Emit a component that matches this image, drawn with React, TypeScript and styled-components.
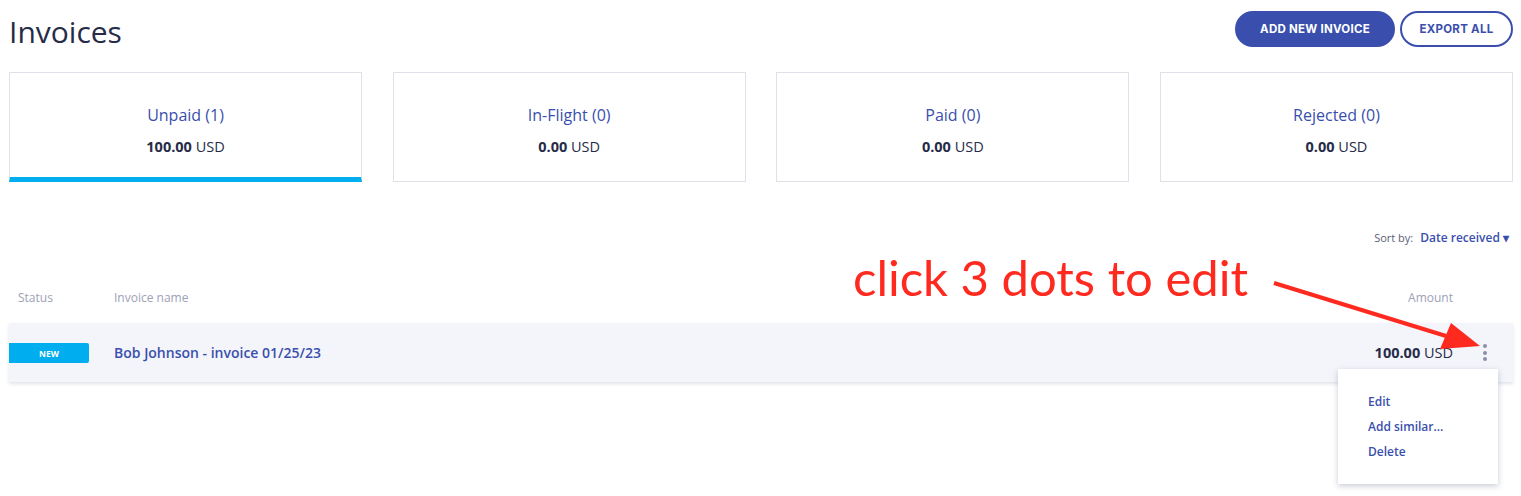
import React from "react";
import styled, { createGlobalStyle } from "styled-components";

const Global = createGlobalStyle`
  html, body { margin: 0; padding: 0; background: #fff; }
  body { font-family: "Open Sans", "Noto Sans", sans-serif; color: #262c48; }
  * { box-sizing: border-box; }
`;

const Page = styled.div`
  position: relative;
  width: 1521px;
  height: 496px;
  padding: 11px 8px 0 9px;
  overflow: hidden;
`;

const TopBar = styled.div`
  display: flex;
  justify-content: space-between;
  align-items: flex-start;
  height: 61px;
`;

const Title = styled.h1`
  margin: 0;
  font-weight: 400;
  font-size: 30px;
  line-height: 44px;
  color: #262c48;
  margin-top: -1px;
`;

const Actions = styled.div`
  display: flex;
  gap: 5px;
`;

const Button = styled.button<{ $primary?: boolean }>`
  height: 36px;
  width: ${(p) => (p.$primary ? "160px" : "113px")};
  padding: 0;
  border-radius: 18px;
  border: 2px solid #3a4fad;
  background: ${(p) => (p.$primary ? "#3a4fad" : "#fff")};
  color: ${(p) => (p.$primary ? "#fff" : "#3a4fad")};
  font-family: "Inter", "Liberation Sans", sans-serif;
  font-weight: 700;
  font-size: 11.5px;
  letter-spacing: 0.25px;
  text-transform: uppercase;
  cursor: pointer;
`;

const Cards = styled.div`
  display: grid;
  grid-template-columns: repeat(4, 353px);
  justify-content: space-between;
`;

const Card = styled.div<{ $active?: boolean }>`
  height: 110px;
  border: 1px solid #dfe1e8;
  border-bottom: ${(p) => (p.$active ? "5px solid #00adef" : "1px solid #dfe1e8")};
  display: flex;
  flex-direction: column;
  align-items: center;
  padding-top: 31px;
`;

const CardTitle = styled.div`
  color: #3a4fad;
  font-size: 16px;
  line-height: 22px;
  font-weight: 500;
`;

const CardAmount = styled.div`
  margin-top: 11px;
  font-size: 14.5px;
  line-height: 20px;
  color: #262c48;
  b { font-weight: 700; }
`;

const SortRow = styled.div`
  display: flex;
  justify-content: flex-end;
  align-items: baseline;
  gap: 7px;
  margin-top: 47px;
  padding-right: 4px;
  height: 18px;
`;

const SortLabel = styled.span`
  font-size: 11px;
  color: #5c6178;
`;

const SortValue = styled.span`
  font-size: 12px;
  color: #3a4fad;
  font-weight: 600;
`;

const HeaderRow = styled.div`
  display: grid;
  grid-template-columns: 96px 1fr auto 60px;
  margin-top: 42px;
  height: 34px;
  font-size: 12px;
  color: #9da1b6;
  padding-left: 9px;
`;

const Row = styled.div`
  display: grid;
  grid-template-columns: 105px 1fr auto 60px;
  align-items: center;
  height: 59px;
  background: #f4f5fa;
  box-shadow: 0 2px 3px rgba(60, 70, 110, 0.15);
`;

const Badge = styled.span`
  width: 80px;
  height: 20px;
  background: #00adef;
  color: #fff;
  font-size: 8.5px;
  font-weight: 700;
  display: flex;
  align-items: center;
  justify-content: center;
  border-radius: 0 2px 2px 0;
  margin-top: 1px;
`;

const Name = styled.span`
  color: #3a4fad;
  font-size: 14px;
  font-weight: 600;
`;

const Amount = styled.span`
  font-size: 14.5px;
  color: #262c48;
  b { font-weight: 700; }
`;

const DotsCell = styled.div`
  display: flex;
  justify-content: center;
  padding-left: 4px;
`;

const Dots = styled.div`
  display: flex;
  flex-direction: column;
  gap: 2.5px;
  span {
    width: 4px;
    height: 4px;
    border-radius: 50%;
    background: #8a8fa6;
  }
`;

const Menu = styled.div`
  position: absolute;
  left: 1338px;
  top: 369px;
  width: 160px;
  height: 115px;
  background: #fff;
  box-shadow: 0 2px 6px rgba(40, 50, 90, 0.25);
  padding: 24px 0 0 30px;
  display: flex;
  flex-direction: column;
  gap: 7px;
`;

const MenuItem = styled.div`
  font-size: 12px;
  color: #3a4fad;
  line-height: 18px;
  font-weight: 600;
`;

const Annotation = styled.div`
  position: absolute;
  left: 853px;
  top: 247px;
  font-family: "Lato", sans-serif;
  font-size: 49px;
  color: #ff2a1f;
  line-height: 60px;
  white-space: nowrap;
`;

const Arrow = styled.svg`
  position: absolute;
  left: 0;
  top: 0;
  pointer-events: none;
`;

const cards = [
  { title: "Unpaid (1)", amount: "100.00", active: true },
  { title: "In-Flight (0)", amount: "0.00" },
  { title: "Paid (0)", amount: "0.00" },
  { title: "Rejected (0)", amount: "0.00" },
];

export default function App() {
  return (
    <Page>
      <Global />
      <TopBar>
        <Title>Invoices</Title>
        <Actions>
          <Button $primary>Add new invoice</Button>
          <Button>Export all</Button>
        </Actions>
      </TopBar>
      <Cards>
        {cards.map((c) => (
          <Card key={c.title} $active={c.active}>
            <CardTitle>{c.title}</CardTitle>
            <CardAmount>
              <b>{c.amount}</b> USD
            </CardAmount>
          </Card>
        ))}
      </Cards>
      <SortRow>
        <SortLabel>Sort by:</SortLabel>
        <SortValue>Date received ▾</SortValue>
      </SortRow>
      <HeaderRow>
        <span>Status</span>
        <span>Invoice name</span>
        <span>Amount</span>
        <span />
      </HeaderRow>
      <Row>
        <Badge>NEW</Badge>
        <Name>Bob Johnson - invoice 01/25/23</Name>
        <Amount>
          <b>100.00</b> USD
        </Amount>
        <DotsCell>
          <Dots>
            <span />
            <span />
            <span />
          </Dots>
        </DotsCell>
      </Row>
      <Menu>
        <MenuItem>Edit</MenuItem>
        <MenuItem>Add similar...</MenuItem>
        <MenuItem>Delete</MenuItem>
      </Menu>
      <Annotation>click 3 dots to edit</Annotation>
      <Arrow width="1521" height="496" viewBox="0 0 1521 496">
        <line x1="1274" y1="283" x2="1446" y2="336" stroke="#ff2a1f" strokeWidth="4" />
        <polygon points="1480,346 1440,349 1451,323" fill="#ff2a1f" />
      </Arrow>
    </Page>
  );
}
